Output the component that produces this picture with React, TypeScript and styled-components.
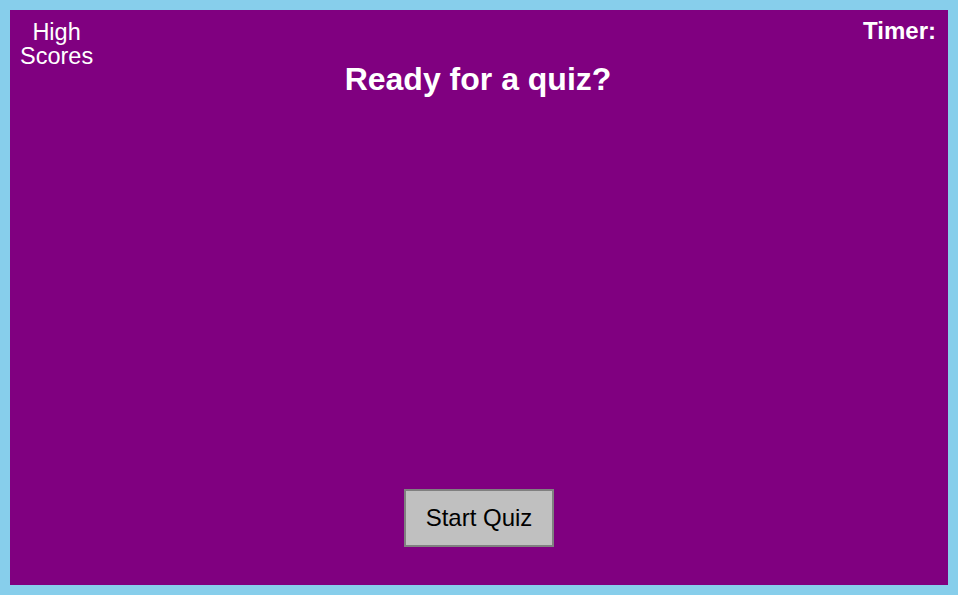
import React from 'react';
import styled, { createGlobalStyle } from 'styled-components';

const GlobalStyle = createGlobalStyle`
    html, body {
        margin: 0;
        padding: 0;
        background: #87ceeb;
        font-family: "Liberation Sans", Arial, sans-serif;
    }
`;

const Page = styled.div`
    box-sizing: border-box;
    height: 595px;
    padding: 10px;
`;

const Board = styled.main`
    box-sizing: border-box;
    height: 100%;
    background: #800080;
    color: #fff;
    display: flex;
    flex-direction: column;
`;

const Header = styled.header`
    display: grid;
    grid-template-columns: 1fr auto 1fr;
    align-items: start;
    padding: 10px 12px 0 10px;
`;

const ScoresLink = styled.a`
    justify-self: start;
    width: min-content;
    text-align: center;
    font-size: 23.5px;
    line-height: 24px;
    color: #fff;
    text-decoration: none;
    cursor: pointer;
`;

const Title = styled.h1`
    margin: 0;
    padding-top: 41px;
    font-size: 32px;
    font-weight: bold;
    text-align: center;
`;

const Timer = styled.h2`
    justify-self: end;
    margin: -3px 0 0;
    font-size: 24px;
    font-weight: bold;
`;

const Spacer = styled.div`
    flex: 1;
`;

const Footer = styled.div`
    display: flex;
    justify-content: center;
    margin-bottom: 38px;
`;

const StartButton = styled.button`
    font-family: "Liberation Sans", Arial, sans-serif;
    font-size: 24px;
    color: #000;
    background: #c0c0c0;
    border: 2px solid #808080;
    padding: 13px 20px;
    cursor: pointer;
`;

const App = () => (
    <Page>
        <GlobalStyle />
        <Board>
            <Header>
                <ScoresLink>High Scores</ScoresLink>
                <Title>Ready for a quiz?</Title>
                <Timer>Timer:</Timer>
            </Header>
            <Spacer />
            <Footer>
                <StartButton>Start Quiz</StartButton>
            </Footer>
        </Board>
    </Page>
);

export default App;
